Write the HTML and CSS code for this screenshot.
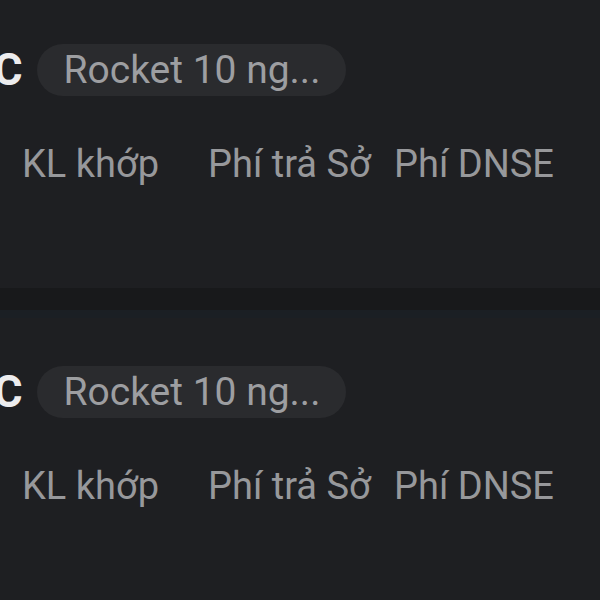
FILE: index.html
```html
<!DOCTYPE html>
<html lang="vi">
<head>
<meta charset="utf-8">
<link rel="stylesheet" href="styles.css">
</head>
<body>
<div class="list">
  <section class="card">
    <div class="head">
      <span class="ticker">ABC</span>
      <span class="pill">Rocket 10 ng...</span>
    </div>
    <div class="cols">
      <span class="label">KL khớp</span>
      <span class="label">Phí trả Sở</span>
      <span class="label">Phí DNSE</span>
    </div>
  </section>
  <div class="sep"></div>
  <section class="card">
    <div class="head">
      <span class="ticker">ABC</span>
      <span class="pill">Rocket 10 ng...</span>
    </div>
    <div class="cols">
      <span class="label">KL khớp</span>
      <span class="label">Phí trả Sở</span>
      <span class="label">Phí DNSE</span>
    </div>
  </section>
</div>
</body>
</html>
```
FILE: styles.css
```css
html, body {
  margin: 0;
  padding: 0;
  background: #1e1f22;
  overflow: hidden;
}
body {
  font-family: Roboto, "Noto Sans", sans-serif;
  width: 600px;
  height: 600px;
}
.list {
  margin-top: -4px;
}
.card {
  padding: 48px 0 102px;
  background: #1e1f22;
}
.head {
  display: flex;
  align-items: center;
  gap: 15px;
  height: 52px;
  margin-left: -64px;
}
.ticker {
  font-weight: 700;
  font-size: 44px;
  color: #ececee;
  line-height: 52px;
}
.pill {
  height: 52px;
  line-height: 52px;
  padding: 0 26px;
  border-radius: 26px;
  background: #2a2b2e;
  color: #9d9ea1;
  font-size: 39px;
  white-space: nowrap;
}
.cols {
  display: grid;
  grid-template-columns: 186px 186px 186px;
  margin-top: 46px;
  padding-left: 22px;
}
.label {
  font-size: 38px;
  line-height: 44px;
  color: #97989b;
  white-space: nowrap;
}
.sep {
  height: 22px;
  background: #18191b;
  border-bottom: 8px solid #1b1f24;
}
```
